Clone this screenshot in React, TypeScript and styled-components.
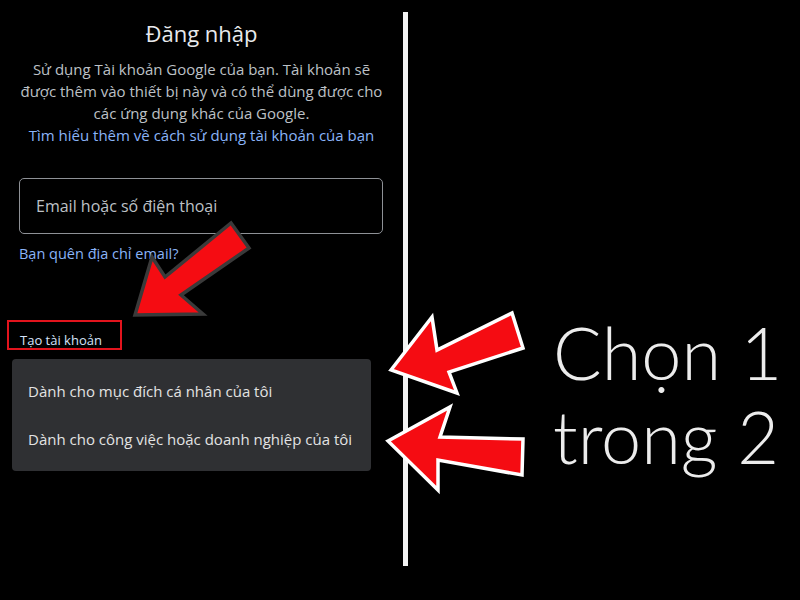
import React from 'react';
import styled, {createGlobalStyle} from 'styled-components';

const GlobalStyle = createGlobalStyle`
    html, body {
        margin: 0;
        padding: 0;
        background: #000;
    }
    body {
        font-family: "Open Sans", "Noto Sans", sans-serif;
    }
`;

const Page = styled.div`
    position: relative;
    width: 800px;
    height: 600px;
    overflow: hidden;
    background: #000;
    display: flex;
`;

const LeftPanel = styled.section`
    flex: 0 0 403px;
    display: flex;
    flex-direction: column;
    padding-top: 19px;
    box-sizing: border-box;
`;

const Title = styled.h1`
    margin: 0;
    font-size: 22px;
    line-height: 28px;
    font-weight: 400;
    color: #e8eaed;
    text-align: center;
`;

const Description = styled.p`
    margin: 11px 0 0;
    font-size: 15px;
    line-height: 22px;
    color: #bdc1c6;
    text-align: center;
`;

const Link = styled.a<{$indent?: number}>`
    display: block;
    color: #8ab4f8;
    font-weight: 500;
    text-decoration: none;
    padding-left: ${({$indent}) => $indent ?? 0}px;
`;

const LearnMore = styled(Link)`
    font-size: 15px;
    line-height: 22px;
    text-align: center;
`;

const EmailField = styled.div`
    margin: 32px 0 0 19px;
    width: 364px;
    height: 56px;
    box-sizing: border-box;
    border: 1px solid #8e9196;
    border-radius: 5px;
    display: flex;
    align-items: center;
    padding-left: 16px;
    font-size: 16px;
    color: #bdc1c6;
`;

const ForgotEmail = styled(Link)`
    margin-top: 10px;
    font-size: 14.5px;
    line-height: 20px;
`;

const CreateAccount = styled.div`
    margin: 56px 0 0 7px;
    width: 115px;
    height: 30px;
    box-sizing: border-box;
    border: 2px solid #e3141d;
    padding: 9px 0 0 11px;
    font-size: 13px;
    line-height: 18px;
    font-weight: 500;
    color: #d6e3fa;
`;

const Menu = styled.ul`
    list-style: none;
    margin: 9px 0 0 12px;
    padding: 8px 0;
    width: 359px;
    background: #2f3033;
    border-radius: 4px;
`;

const MenuItem = styled.li`
    height: 48px;
    display: flex;
    align-items: center;
    padding-left: 16px;
    font-size: 15px;
    color: #e3e3e3;
`;

const Divider = styled.div`
    flex: 0 0 5px;
    margin-top: 12px;
    height: 554px;
    background: #f2f2f2;
`;

const RightPanel = styled.section`
    flex: 1;
    padding: 310px 0 0 145px;
`;

const Caption = styled.div`
    font-family: "Lato", "DejaVu Sans", sans-serif;
    font-weight: 300;
    font-size: 72px;
    line-height: 84px;
    color: #ececec;
    white-space: nowrap;
`;

const Overlay = styled.svg`
    position: absolute;
    inset: 0;
    pointer-events: none;
`;

const Arrow = styled.polygon<{$edge: string}>`
    fill: #f50c12;
    stroke: ${({$edge}) => $edge};
    stroke-width: 3.5;
    stroke-linejoin: miter;
`;

const arrows = [
    {
        points: '135,315 152,257 165,277 231,223 249,248 181,295 203,314',
        edge: '#3a3a3a',
    },
    {
        points: '391,370 432,317 437,350 512,313 523,348 449,372 457,393',
        edge: '#ffffff',
    },
    {
        points: '388,441 450,407 440,437 523,439 522,475 438,460 438,490',
        edge: '#ffffff',
    },
];

const App = () => (
    <>
        <GlobalStyle />
        <Page>
            <LeftPanel>
                <Title>Đăng nhập</Title>
                <Description>
                    Sử dụng Tài khoản Google của bạn. Tài khoản sẽ
                    <br />
                    được thêm vào thiết bị này và có thể dùng được cho
                    <br />
                    các ứng dụng khác của Google.
                </Description>
                <LearnMore href="#">Tìm hiểu thêm về cách sử dụng tài khoản của bạn</LearnMore>
                <EmailField>Email hoặc số điện thoại</EmailField>
                <ForgotEmail href="#" $indent={19}>
                    Bạn quên địa chỉ email?
                </ForgotEmail>
                <CreateAccount>Tạo tài khoản</CreateAccount>
                <Menu>
                    <MenuItem>Dành cho mục đích cá nhân của tôi</MenuItem>
                    <MenuItem>Dành cho công việc hoặc doanh nghiệp của tôi</MenuItem>
                </Menu>
            </LeftPanel>
            <Divider />
            <RightPanel>
                <Caption>Chọn 1</Caption>
                <Caption>trong 2</Caption>
            </RightPanel>
            <Overlay viewBox="0 0 800 600" width="800" height="600">
                {arrows.map((arrow, i) => (
                    <Arrow key={i} points={arrow.points} $edge={arrow.edge} />
                ))}
            </Overlay>
        </Page>
    </>
);

export default App;
